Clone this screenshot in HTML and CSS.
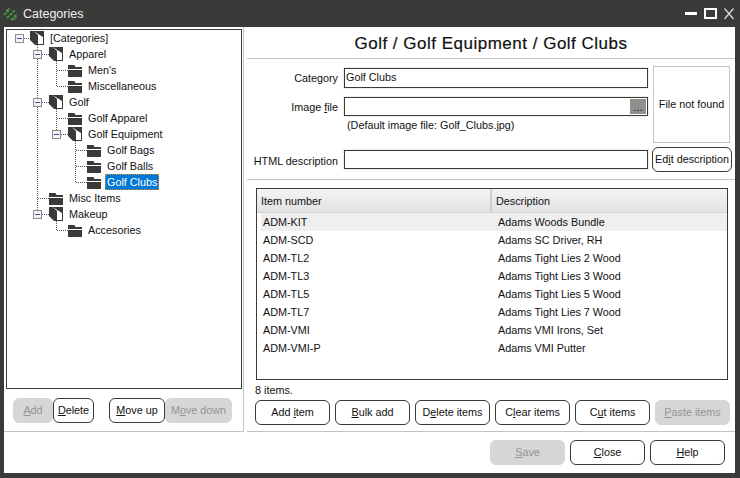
FILE: index.html
```html
<!DOCTYPE html>
<html lang="en">
<head>
<meta charset="utf-8">
<title>Categories</title>
<link rel="stylesheet" href="styles.css">
</head>
<body>
<svg class="defs" width="0" height="0" aria-hidden="true">
  <symbol id="folder" viewBox="0 0 14 13">
    <path fill="#3a3a38" d="M0 1h6.500l1 2H14v2H0zM0 6h14v7H0z"/>
  </symbol>
  <symbol id="open" viewBox="0 0 14 14">
    <path fill="#3a3a38" d="M0 0h14v14H5L0 9z"/>
    <path fill="#fff" d="M3.500 0L13 6v7H8V4z"/>
  </symbol>
</svg>
<div class="window">
  <header class="titlebar">
    <svg class="logo" width="16" height="16" viewBox="0 0 16 16"><path d="M1 9l6-6M4 12l8-8M8 14l6-6" stroke="#3f9a3f" stroke-width="2" fill="none" stroke-dasharray="3 1"/><path d="M3 5l3-3M10 14l4-3" stroke="#7a8a7a" stroke-width="1" fill="none"/></svg>
    <span class="title">Categories</span>
    <div class="winctl">
      <svg width="12" height="14" viewBox="0 0 12 14"><rect x="0" y="5" width="12" height="3" fill="#fff"/></svg>
      <svg width="13" height="14" viewBox="0 0 13 14"><rect x="1" y="2" width="11" height="9" fill="none" stroke="#fff" stroke-width="2"/></svg>
      <svg width="10" height="14" viewBox="0 0 10 14"><path d="M0.500 1.500l9 10.500M9.500 1.500l-9 10.500" stroke="#d8d8d8" stroke-width="1.300" fill="none"/></svg>
    </div>
  </header>
  <div class="body">
    <div class="main">
      <aside class="left">
        <div class="tree">
          <svg class="lines" width="234" height="240" aria-hidden="true"><path d="M17 8.500H23M30.500 15V180M30.500 168.500H42M35 24.500H42M35 72.500H42M35 184.500H42M49.500 31V56.500M49.500 40.500H61M49.500 56.500H61M49.500 79V100M49.500 88.500H61M54 104.500H61M68.500 111V152.500M68.500 120.500H80M68.500 136.500H80M68.500 152.500H80M49.500 191V200.500H61" stroke="#555" stroke-dasharray="1 1" fill="none" shape-rendering="crispEdges"/></svg>
          <div class="node d0"><i class="ex"></i><svg class="ic-open"><use href="#open"/></svg><span>[Categories]</span></div>
          <div class="node d1"><i class="ex"></i><svg class="ic-open"><use href="#open"/></svg><span>Apparel</span></div>
          <div class="node d2"><svg class="ic-f"><use href="#folder"/></svg><span>Men's</span></div>
          <div class="node d2"><svg class="ic-f"><use href="#folder"/></svg><span>Miscellaneous</span></div>
          <div class="node d1"><i class="ex"></i><svg class="ic-open"><use href="#open"/></svg><span>Golf</span></div>
          <div class="node d2"><svg class="ic-f"><use href="#folder"/></svg><span>Golf Apparel</span></div>
          <div class="node d2"><i class="ex"></i><svg class="ic-open"><use href="#open"/></svg><span>Golf Equipment</span></div>
          <div class="node d3"><svg class="ic-f"><use href="#folder"/></svg><span>Golf Bags</span></div>
          <div class="node d3"><svg class="ic-f"><use href="#folder"/></svg><span>Golf Balls</span></div>
          <div class="node d3"><svg class="ic-f"><use href="#folder"/></svg><span class="sel">Golf Clubs</span></div>
          <div class="node d1"><svg class="ic-f"><use href="#folder"/></svg><span>Misc Items</span></div>
          <div class="node d1"><i class="ex"></i><svg class="ic-open"><use href="#open"/></svg><span>Makeup</span></div>
          <div class="node d2"><svg class="ic-f"><use href="#folder"/></svg><span>Accesories</span></div>
        </div>
        <div class="treebtns">
          <button class="btn dis w-add"><u>A</u>dd</button>
          <button class="btn w-del"><u>D</u>elete</button>
          <span class="gap"></span>
          <button class="btn mv"><u>M</u>ove up</button>
          <button class="btn dis mv2">M<u>o</u>ve down</button>
        </div>
      </aside>
      <section class="right">
        <h1 class="heading">Golf / Golf Equipment / Golf Clubs</h1>
        <div class="form">
          <div class="fields">
            <div class="row"><label>Cate<u>g</u>ory</label><div class="input tall">Golf Clubs</div></div>
            <div class="row"><label>Image <u>f</u>ile</label><div class="input"><b class="dots">...</b></div></div>
            <div class="hint">(Default image file: Golf_Clubs.jpg)</div>
          </div>
          <div class="preview">File not found</div>
        </div>
        <div class="row html"><label>HTML description</label><div class="input"></div><button class="btn edit">Ed<u>i</u>t description</button></div>
        <div class="items">
          <div class="table">
            <div class="thead"><div class="c1">Item number</div><div class="c2">Description</div></div>
            <div class="tr first"><div class="c1">ADM-KIT</div><div class="c2">Adams Woods Bundle</div></div>
            <div class="tr"><div class="c1">ADM-SCD</div><div class="c2">Adams SC Driver, RH</div></div>
            <div class="tr"><div class="c1">ADM-TL2</div><div class="c2">Adams Tight Lies 2 Wood</div></div>
            <div class="tr"><div class="c1">ADM-TL3</div><div class="c2">Adams Tight Lies 3 Wood</div></div>
            <div class="tr"><div class="c1">ADM-TL5</div><div class="c2">Adams Tight Lies 5 Wood</div></div>
            <div class="tr"><div class="c1">ADM-TL7</div><div class="c2">Adams Tight Lies 7 Wood</div></div>
            <div class="tr"><div class="c1">ADM-VMI</div><div class="c2">Adams VMI Irons, Set</div></div>
            <div class="tr"><div class="c1">ADM-VMI-P</div><div class="c2">Adams VMI Putter</div></div>
          </div>
          <div class="count">8 items.</div>
          <div class="itembtns">
            <button class="btn w75">Add <u>i</u>tem</button>
            <button class="btn w75"><u>B</u>ulk add</button>
            <button class="btn w75">D<u>e</u>lete items</button>
            <button class="btn w75">C<u>l</u>ear items</button>
            <button class="btn w75">C<u>u</u>t items</button>
            <button class="btn w75 dis"><u>P</u>aste items</button>
          </div>
        </div>
      </section>
    </div>
    <footer class="footer">
      <button class="btn w75 dis"><u>S</u>ave</button>
      <button class="btn w75"><u>C</u>lose</button>
      <button class="btn w75"><u>H</u>elp</button>
    </footer>
  </div>
</div>
</body>
</html>
```

FILE: styles.css
```css
* { box-sizing: border-box; }
html, body { margin: 0; padding: 0; }
body { width: 740px; height: 478px; overflow: hidden; background: #3a3b38; font: 10.8px/16px "Liberation Sans", Arial, sans-serif; color: #111; }
.defs { position: absolute; }
.window { width: 740px; height: 478px; display: flex; flex-direction: column; background: #3a3b38; }
.titlebar { height: 27px; flex: none; display: flex; align-items: center; padding: 0 0 0 3px; color: #f0f0f0; }
.logo { margin-right: 4px; }
.title { font-size: 12.5px; }
.winctl { margin-left: auto; display: flex; align-items: center; gap: 7px; padding-right: 6px; }
.body { width: 731px; height: 446px; margin-left: 4px; background: #fff; display: flex; flex-direction: column; }
.main { flex: none; height: 405px; display: flex; gap: 3px; }
.left { width: 240px; flex: none; height: 405px; border-right: 1px solid #c4c4c4; border-bottom: 1px solid #c4c4c4; padding: 2px 0 0 2px; display: flex; flex-direction: column; }
.tree { position: relative; height: 360px; width: 236px; flex: none; border: 1px solid #3a3b38; }
.lines { position: absolute; left: 0; top: 0; }
.node { height: 16px; display: flex; align-items: center; position: relative; white-space: nowrap; }
.node span { padding: 0 2px; margin-left: 4px; line-height: 16px; }
.d0 { padding-left: 23px; }
.d1 { padding-left: 42px; }
.d2 { padding-left: 61px; }
.d3 { padding-left: 80px; }
.ex { width: 9px; height: 9px; flex: none; margin-left: -16px; margin-right: 7px; border: 1px solid #8c8c8c; background: #f2f2f2 linear-gradient(#3f5aa0, #3f5aa0) center / 5px 1px no-repeat; }
.d0 .ex { margin-left: -15px; margin-right: 6px; }
.ic-f { width: 14px; height: 13px; flex: none; }
.ic-open { width: 14px; height: 14px; flex: none; }
.sel { background: #0078d7; color: #fff; outline: 1px dotted #e08a20; outline-offset: -1px; }
.treebtns { display: flex; height: 25px; margin-top: 9px; padding-left: 7px; }
.gap { width: 15px; flex: none; }
.btn { height: 25px; flex: none; padding: 0; font: inherit; line-height: 23px; color: #111; background: #fff; border: 1px solid #3a3b38; border-radius: 6px; white-space: nowrap; }
.btn.dis { background: #d6d6d6; border-color: #d6d6d6; color: #949494; }
.w-add { width: 40px; }
.w-del { width: 41px; }
.mv { width: 56px; }
.mv2 { width: 67px; }
.w75 { width: 75px; }
.right { flex: 1; display: flex; flex-direction: column; min-width: 0; }
.heading { margin: 0; height: 32px; flex: none; padding-top: 2px; font: 400 17px/30px "Liberation Sans", Arial, sans-serif; letter-spacing: .5px; text-align: center; color: #111; border-bottom: 1px solid #c4c4c4; -webkit-text-stroke: .2px #111; }
.form { display: flex; height: 88px; flex: none; }
.fields { width: 401px; flex: none; padding-top: 9px; display: flex; flex-direction: column; gap: 9px; }
.row { display: flex; align-items: center; }
.row label { width: 97px; flex: none; text-align: right; padding-right: 6px; white-space: nowrap; }
.input { flex: 1; height: 19px; border: 1px solid #3a3b38; background: #fff; padding: 0 0 0 1px; line-height: 17px; position: relative; box-shadow: 0 0 0 1px #efefe8; }
.input.tall { height: 20px; }
.dots { position: absolute; right: 1px; top: 1px; width: 16px; height: 15px; background: #8f8f8c; font-weight: 400; line-height: 17px; text-align: center; }
.hint { padding-left: 100px; height: 16px; margin-top: -8px; }
.preview { width: 77px; height: 77px; margin: 7px 0 0 5px; padding-bottom: 2px; border: 1px solid #c4c4c4; display: flex; align-items: center; justify-content: center; }
.html { height: 25px; flex: none; }
.html label { padding-top: 2px; }
.html .input { flex: none; width: 304px; }
.edit { width: 80px; margin-left: 4px; }
.items { margin-top: 7px; border-top: 1px solid #c4c4c4; border-bottom: 1px solid #c4c4c4; padding: 8px 0 0 9px; flex: 1; display: flex; flex-direction: column; }
.table { width: 472px; height: 192px; border: 1px solid #3a3b38; background: #fff; flex: none; }
.thead { display: flex; height: 24px; background: linear-gradient(#f4f4f4, #e2e2e2); border-bottom: 1px solid #d4d4d4; line-height: 25px; }
.thead .c1 { width: 235px; padding-left: 4px; border-right: 2px solid #d0d0d0; }
.thead .c2 { padding-left: 4px; }
.tr { display: flex; height: 18px; line-height: 18px; }
.tr .c1 { width: 235px; padding-left: 6px; }
.tr .c2 { padding-left: 6px; }
.first { background: #efefef; margin-left: 4px; }
.first .c1 { width: 231px; padding-left: 2px; }
.count { height: 20px; line-height: 20px; flex: none; margin-left: -1px; }
.itembtns { display: flex; gap: 5px; margin-left: -1px; }
.footer { flex: none; height: 41px; display: flex; justify-content: flex-end; gap: 5px; padding: 8px 10px 0 0; }
```
